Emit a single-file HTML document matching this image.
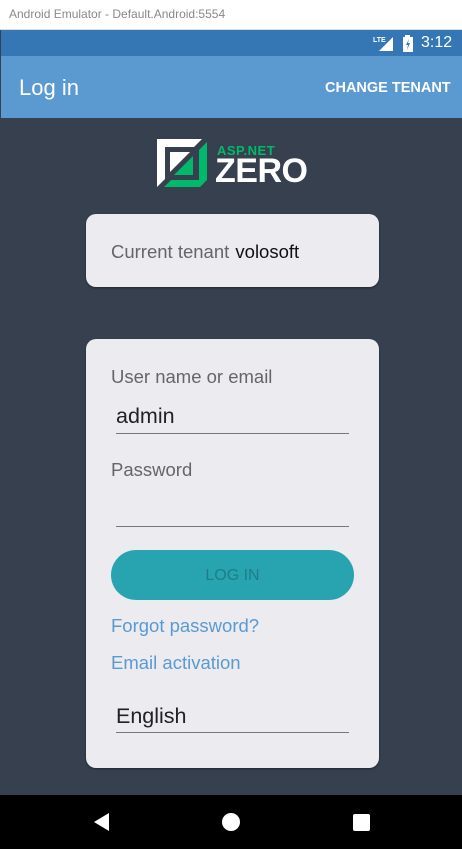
<!DOCTYPE html>
<html><head><meta charset="utf-8"><style>
*{margin:0;padding:0;box-sizing:border-box}
body{width:462px;height:849px;overflow:hidden;background:#36404e;font-family:"Liberation Sans",sans-serif;position:relative}
.a{position:absolute}
.card{position:absolute;left:86px;width:293px;background:#ebebf0;border-radius:10px;box-shadow:0 1px 2px rgba(0,0,0,.4)}
.lbl{position:absolute;left:111px;font-size:18.5px;color:#666}
.line{position:absolute;left:116px;width:233px;height:1px;background:#777}
.val{position:absolute;left:116px;font-size:21.5px;color:#222}
.link{position:absolute;left:111px;font-size:18.5px;color:#5b9ad0}
</style></head><body>
<div class="a" style="left:0;top:0;width:462px;height:30px;background:#fff;border-bottom:1px solid #ddd"></div>
<div class="a" style="left:9px;top:7px;font-size:12px;color:#888">Android Emulator - Default.Android:5554</div>
<div class="a" style="left:1px;top:30px;width:461px;height:26px;background:#3577b5"></div>
<svg class="a" style="left:373px;top:35px" width="22" height="17"><text x="0" y="7" font-size="7" fill="#fff" font-family="Liberation Sans" font-weight="bold">LTE</text><polygon points="20,2 20,16 6,16" fill="#fff"/></svg>
<svg class="a" style="left:402px;top:35px" width="12" height="17"><rect x="3" y="0" width="5" height="2" fill="#fff"/><rect x="1" y="2" width="10" height="15" fill="#fff"/><path d="M7 4 L4 10 L6 10 L5 15 L8 8 L6 8 Z" fill="#3577b5"/></svg>
<div class="a" style="left:421px;top:34px;font-size:16px;color:#fff">3:12</div>
<div class="a" style="left:1px;top:56px;width:461px;height:62px;background:#5b9ad0"></div>
<div class="a" style="left:19px;top:75px;font-size:22px;color:#fff">Log in</div>
<div class="a" style="left:325px;top:80px;font-size:14.5px;color:#fff;font-weight:bold">CHANGE TENANT</div>
<svg class="a" style="left:157px;top:139px" width="52" height="50">
<path d="M0 0 H45 L37 8 H8 V40 L0 48 Z" fill="#fff"/>
<path d="M50 3 V41 L43 48 H7 L14 41 H42 V11 Z" fill="#00b96b"/>
<path d="M13 13 H33 L13 33 Z" fill="#fff"/><path d="M36 17 V36 H17 Z" fill="#00b96b"/>
</svg>
<div class="a" style="left:217px;top:143px;font-size:13px;font-weight:bold;color:#00b96b;letter-spacing:.5px">ASP.NET</div>
<div class="a" style="left:215px;top:152px;font-size:34px;font-weight:bold;color:#fff;letter-spacing:-0.5px">ZERO</div>
<div class="card" style="top:214px;height:73px"></div>
<div class="a" style="left:111px;top:241px;font-size:18.5px;color:#666">Current tenant <span style="color:#111;margin-left:1px">volosoft</span></div>
<div class="card" style="top:339px;height:429px"></div>
<div class="lbl" style="top:366px">User name or email</div>
<div class="val" style="top:404px">admin</div>
<div class="line" style="top:433px"></div>
<div class="lbl" style="top:459px">Password</div>
<div class="line" style="top:526px"></div>
<div class="a" style="left:111px;top:550px;width:243px;height:50px;border-radius:25px;background:#27a4b0;color:#1d7e88;font-size:16px;text-align:center;line-height:52px">LOG IN</div>
<div class="link" style="top:615px">Forgot password?</div>
<div class="link" style="top:652px">Email activation</div>
<div class="val" style="top:704px">English</div>
<div class="line" style="top:732px"></div>
<div class="a" style="left:0;top:795px;width:462px;height:54px;background:#000"></div>
<svg class="a" style="left:0;top:795px" width="462" height="54">
<polygon points="94,27 109,18 109,36" fill="#fff"/>
<circle cx="231" cy="27" r="9" fill="#fff"/>
<rect x="353" y="19" width="17" height="17" rx="2" fill="#fff"/>
</svg>
</body></html>
